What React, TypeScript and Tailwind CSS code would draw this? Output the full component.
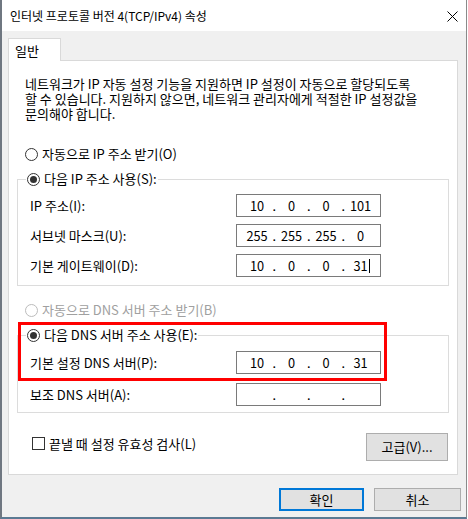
import React, { Fragment } from "react";

function Radio({ checked, disabled }: { checked?: boolean; disabled?: boolean }) {
  return (
    <span
      className={
        disabled
          ? "inline-flex h-[13px] w-[13px] shrink-0 items-center justify-center rounded-full border border-[#bcbcbc] bg-white"
          : "inline-flex h-[13px] w-[13px] shrink-0 items-center justify-center rounded-full border border-[#333333] bg-white"
      }
    >
      {checked ? <span className="h-[7px] w-[7px] rounded-full bg-[#333333]" /> : null}
    </span>
  );
}

function IpBox({ parts, cursor }: { parts: string[]; cursor?: boolean }) {
  return (
    <div className="flex h-[23px] w-[145px] shrink-0 items-center border border-[#7a7a7a] bg-white pl-[7px] text-[12.75px] text-black">
      {parts.map((p, i) => (
        <Fragment key={i}>
          {i > 0 ? <span className="w-[8.5px] text-center">.</span> : null}
          <span className="relative w-[26px] text-center">
            {p}
            {cursor && i === 3 ? (
              <span className="absolute left-[21px] top-[1px] h-[14px] w-px bg-black" />
            ) : null}
          </span>
        </Fragment>
      ))}
    </div>
  );
}

function Row({ label, parts, cursor }: { label: string; parts: string[]; cursor?: boolean }) {
  return (
    <div className="flex h-[23px] items-center">
      <span className="w-[218px] whitespace-nowrap pl-[12px]">{label}</span>
      <IpBox parts={parts} cursor={cursor} />
    </div>
  );
}

export default function App() {
  return (
    <div className="h-[519px] w-[468px] bg-white font-['Noto_Sans_CJK_KR',sans-serif] text-[13px] leading-[16px] text-black">
      <div className="relative flex h-[519px] w-[467px] flex-col border-b-2 border-l-2 border-r border-b-[#5b7a93] border-l-[#6f7781] border-r-[#8a8a8a]">
        {/* Title bar */}
        <div className="flex h-[31px] shrink-0 items-center justify-between bg-white pl-[8px] pr-[8px]">
          <span className="text-[12px] text-black">인터넷 프로토콜 버전 4(TCP/IPv4) 속성</span>
          <svg width="11" height="11" viewBox="0 0 11 11" className="mb-[-1px]">
            <path d="M0.5 0.5 L10.5 10.5 M10.5 0.5 L0.5 10.5" stroke="#000" strokeWidth="1" fill="none" />
          </svg>
        </div>

        {/* Body */}
        <div className="flex flex-1 flex-col bg-[#f0f0f0]">
          {/* Tab */}
          <div className="ml-[6px] mt-[7px] flex">
            <div className="relative z-10 mb-[-1px] flex h-[23px] w-[53px] items-start border border-b-0 border-[#d9d9d9] bg-white pl-[6px] pt-[4px]">
              일반
            </div>
          </div>

          {/* Panel */}
          <div className="ml-[6px] flex w-[450px] flex-col border border-[#d9d9d9] bg-white pb-[13px]">
            <p className="ml-[16px] mt-[15px] whitespace-nowrap leading-[15px]">
              네트워크가 IP 자동 설정 기능을 지원하면 IP 설정이 자동으로 할당되도록
              <br />
              할 수 있습니다. 지원하지 않으면, 네트워크 관리자에게 적절한 IP 설정값을
              <br />
              문의해야 합니다.
            </p>

            <div className="ml-[16px] mt-[25px] flex h-[16px] items-center gap-[4px]">
              <Radio />
              <span>자동으로 IP 주소 받기(O)</span>
            </div>

            <fieldset className="mx-[8px] mt-[9px] flex flex-col gap-[7px] border border-[#dcdcdc] pb-[8px] pt-[7px]">
              <legend className="ml-[8px] px-px">
                <span className="flex h-[16px] items-center gap-[4px]">
                  <Radio checked />
                  <span>다음 IP 주소 사용(S):</span>
                </span>
              </legend>
              <Row label="IP 주소(I):" parts={["10", "0", "0", "101"]} />
              <Row label="서브넷 마스크(U):" parts={["255", "255", "255", "0"]} />
              <Row label="기본 게이트웨이(D):" parts={["10", "0", "0", "31"]} cursor />
            </fieldset>

            <div className="ml-[16px] mt-[16px] flex h-[16px] items-center gap-[4px] text-[#a0a0a0]">
              <Radio disabled />
              <span>자동으로 DNS 서버 주소 받기(B)</span>
            </div>

            <fieldset className="mx-[8px] mt-[9px] flex flex-col gap-[9px] border border-[#dcdcdc] pb-[6px] pt-[8px]">
              <legend className="ml-[8px] px-px">
                <span className="flex h-[16px] items-center gap-[4px]">
                  <Radio checked />
                  <span>다음 DNS 서버 주소 사용(E):</span>
                </span>
              </legend>
              <Row label="기본 설정 DNS 서버(P):" parts={["10", "0", "0", "31"]} />
              <Row label="보조 DNS 서버(A):" parts={["", "", "", ""]} />
            </fieldset>

            <div className="mt-[20px] flex items-start justify-between pl-[23px] pr-[9px]">
              <div className="mt-[4px] flex h-[13px] items-center gap-[4px]">
                <span className="h-[13px] w-[13px] shrink-0 border border-[#333333] bg-white" />
                <span>끝낼 때 설정 유효성 검사(L)</span>
              </div>
              <div className="flex h-[28px] w-[82px] items-center justify-center border border-[#adadad] bg-[#e1e1e1]">
                고급(V)...
              </div>
            </div>
          </div>

          {/* Bottom buttons */}
          <div className="mt-[13px] flex justify-end gap-[10px] pr-[5px]">
            <div className="flex h-[23px] w-[85px] items-center justify-center border-2 border-[#0078d7] bg-[#e1e1e1]">
              확인
            </div>
            <div className="flex h-[23px] w-[87px] items-center justify-center border border-[#adadad] bg-[#e1e1e1]">
              취소
            </div>
          </div>
        </div>

        {/* Red annotation box */}
        <div className="pointer-events-none absolute left-[16px] top-[322px] z-20 h-[59px] w-[369px] border-[3px] border-[#ff0000]" />
      </div>
    </div>
  );
}
